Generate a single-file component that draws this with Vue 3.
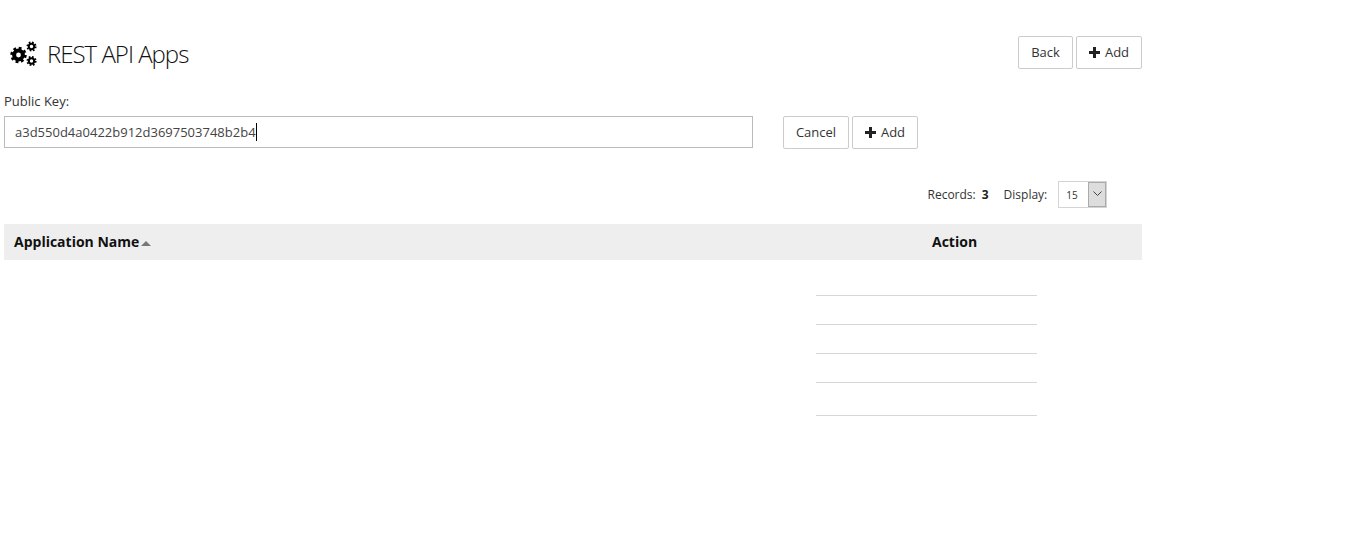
<script setup>
const rowHeights = [29, 29, 29, 29, 33]
</script>

<template>
  <div class="page">
    <header class="head">
      <h1 class="title">
        <svg class="cogs" viewBox="0 0 28 26" width="28" height="26" aria-hidden="true">
          <g fill="none" stroke="#000">
            <circle cx="9.5" cy="14" r="4.4" stroke-width="4" />
            <circle cx="9.5" cy="14" r="6.9" stroke-width="2.6" stroke-dasharray="2.8 2.62" />
            <circle cx="22.5" cy="5.5" r="2.7" stroke-width="2" />
            <circle cx="22.5" cy="5.5" r="4.2" stroke-width="1.7" stroke-dasharray="1.7 1.6" />
            <circle cx="22.5" cy="20" r="2.7" stroke-width="2" />
            <circle cx="22.5" cy="20" r="4.2" stroke-width="1.7" stroke-dasharray="1.7 1.6" />
          </g>
        </svg>
        <span>REST API Apps</span>
      </h1>
      <div class="btns">
        <button class="btn back">Back</button>
        <button class="btn add"><svg class="plus" viewBox="0 0 11 11" width="11" height="11"><path d="M4 0h3v4h4v3H7v4H4V7H0V4h4z" /></svg>Add</button>
      </div>
    </header>

    <label class="key-label">Public Key:</label>
    <div class="key-row">
      <div class="key-input"><span>a3d550d4a0422b912d3697503748b2b4</span><i class="caret"></i></div>
      <div class="btns">
        <button class="btn cancel">Cancel</button>
        <button class="btn add"><svg class="plus" viewBox="0 0 11 11" width="11" height="11"><path d="M4 0h3v4h4v3H7v4H4V7H0V4h4z" /></svg>Add</button>
      </div>
    </div>

    <div class="pager">
      <span>Records:</span>
      <b class="count">3</b>
      <span class="disp">Display:</span>
      <div class="select">
        <span class="val">15</span>
        <span class="arrow"><svg viewBox="0 0 9 6" width="9" height="6"><path d="M.5.5 4.5 4.5 8.5.5" fill="none" stroke="#444" /></svg></span>
      </div>
    </div>

    <div class="thead">
      <div class="th name">Application Name<i class="sort"></i></div>
      <div class="th action">Action</div>
    </div>

    <div class="rows">
      <div v-for="(h, i) in rowHeights" :key="i" class="row" :style="{ height: h + 'px' }"></div>
    </div>
  </div>
</template>

<style scoped>
.page {
  width: 1138px;
  margin-left: 4px;
  padding-top: 36px;
  font-family: "Open Sans", sans-serif;
  font-size: 13px;
  color: #333;
}
.head {
  display: flex;
  justify-content: space-between;
  align-items: flex-start;
  height: 57px;
}
.title {
  display: flex;
  align-items: center;
  margin: 0;
  height: 35px;
  padding-left: 5px;
  font-size: 24px;
  font-weight: 300;
  letter-spacing: -1px;
  color: #111;
}
.cogs { margin-right: 10px; flex: none; }
.btns { display: flex; gap: 3px; }
.btn {
  display: flex;
  align-items: center;
  justify-content: center;
  height: 33px;
  padding: 0 0 2px;
  background: #fff;
  border: 1px solid #ccc;
  border-radius: 2px;
  font: 13px "Open Sans", sans-serif;
  color: #333;
}
.back { width: 55px; }
.cancel { width: 66px; }
.add { width: 66px; }
.plus { fill: #222; margin-right: 5px; margin-top: 1px; }
.key-label { display: block; height: 23px; line-height: 17px; font-size: 13px; }
.key-row { display: flex; gap: 30px; align-items: flex-start; }
.key-input {
  box-sizing: border-box;
  display: flex;
  align-items: center;
  width: 749px;
  height: 32px;
  padding-left: 10px;
  border: 1px solid #bbb;
  font-size: 13px;
  color: #444;
}
.caret { width: 1px; height: 18px; background: #000; }
.pager {
  display: flex;
  align-items: center;
  height: 28px;
  margin-top: 31px;
  padding-left: 923.5px;
  font-size: 12px;
}
.count { margin-left: 6px; color: #222; }
.disp { margin-left: 15px; }
.select {
  box-sizing: border-box;
  display: flex;
  justify-content: space-between;
  width: 49px;
  height: 27px;
  margin-left: 11px;
  border: 1px solid #d4d4d4;
  font-size: 10px;
}
.val { padding-left: 7px; line-height: 27px; }
.arrow {
  display: flex;
  align-items: center;
  justify-content: center;
  box-sizing: border-box;
  width: 18px;
  background: #ddd;
  border: 1px solid #aaa;
}
.thead {
  display: flex;
  align-items: center;
  height: 36px;
  margin-top: 16px;
  padding-bottom: 1px;
  box-sizing: border-box;
  background: #eee;
  font-size: 14px;
  font-weight: 700;
  color: #111;
}
.th.name { width: 928px; padding-left: 10px; box-sizing: border-box; display: flex; align-items: center; }
.sort {
  width: 0;
  height: 0;
  margin: 3px 0 0 2px;
  border-left: 5px solid transparent;
  border-right: 5px solid transparent;
  border-bottom: 5px solid #777;
}
.rows { width: 221px; margin-left: 812px; padding-top: 7px; }
.row { box-sizing: border-box; border-bottom: 1px solid #d6d6d6; }
</style>

<style>
html, body { background: #fff; }
</style>
